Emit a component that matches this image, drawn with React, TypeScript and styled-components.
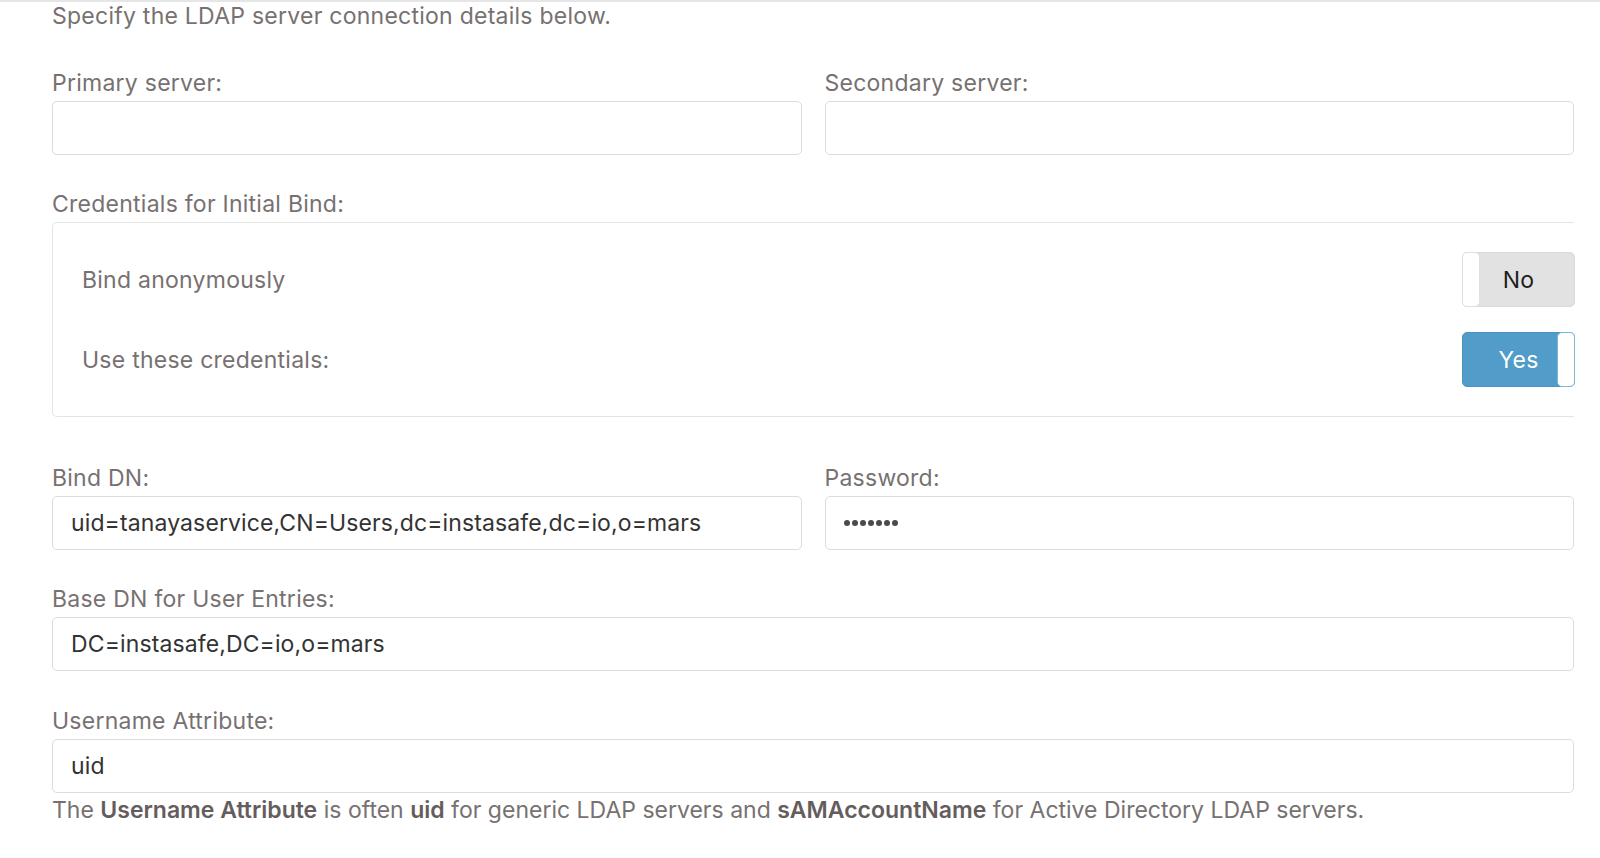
import React from "react";
import styled, { createGlobalStyle } from "styled-components";

const Global = createGlobalStyle`
  html, body { margin: 0; padding: 0; background: #ffffff; }
  body { font-family: Inter, "Open Sans", "Liberation Sans", sans-serif; }
  * { box-sizing: border-box; }
`;

const Page = styled.div`
  border-top: 2px solid #e6e6e6;
  padding: 0 26px 20px 52px;
  width: 1600px;
  font-size: 23px;
  letter-spacing: 0.25px;
`;

const Intro = styled.p`
  margin: 0;
  line-height: 28px;
  color: #777171;
`;

const Row = styled.div<{ $mt: number }>`
  display: grid;
  grid-template-columns: 1fr 1fr;
  column-gap: 23px;
  margin-top: ${(p) => p.$mt}px;
`;

const Field = styled.div<{ $mt?: number }>`
  display: flex;
  flex-direction: column;
  margin-top: ${(p) => p.$mt ?? 0}px;
`;

const Label = styled.label`
  display: block;
  line-height: 28px;
  height: 28px;
  margin-bottom: 4px;
  color: #777171;
`;

const Input = styled.div`
  height: 54px;
  border: 1px solid #dcdcdc;
  border-radius: 5px;
  background: #fff;
  display: flex;
  align-items: center;
  padding-left: 18px;
  color: #333;
  letter-spacing: 0.12px;
`;

const Dots = styled.span`
  display: flex;
  gap: 2px;
`;

const Dot = styled.span`
  width: 6px;
  height: 6px;
  border-radius: 50%;
  background: #4a4a4a;
`;

const CredBox = styled.div`
  border: 1px solid #e4e4e4;
  border-right: none;
  border-radius: 5px 0 0 5px;
  padding: 29px 0 29px 29px;
  display: flex;
  flex-direction: column;
  gap: 25px;
`;

const CredRow = styled.div`
  display: flex;
  align-items: center;
  justify-content: space-between;
  height: 55px;
`;

const CredLabel = styled.span`
  color: #777171;
`;

const Toggle = styled.div<{ $on: boolean }>`
  position: relative;
  width: 113px;
  height: 55px;
  margin-right: -1px;
  border-radius: 5px;
  border: 1px solid ${(p) => (p.$on ? "#4b93c0" : "#dadada")};
  background: ${(p) => (p.$on ? "#519cc9" : "#e2e2e2")};
  color: ${(p) => (p.$on ? "#ffffff" : "#1e1e1e")};
  display: flex;
  align-items: center;
  justify-content: center;
`;

const Knob = styled.span<{ $on: boolean }>`
  position: absolute;
  top: -1px;
  bottom: -1px;
  ${(p) => (p.$on ? "right: -1px;" : "left: -1px;")}
  width: 18px;
  background: #fff;
  border: 1px solid ${(p) => (p.$on ? "#7fb4d6" : "#e0e0e0")};
  border-radius: 5px;
`;

const Help = styled.p`
  margin: 3px 0 0 0;
  line-height: 28px;
  color: #777171;
  letter-spacing: 0;
  b {
    font-weight: 600;
    color: #655d5d;
  }
`;

export default function App() {
  return (
    <>
      <Global />
      <Page>
        <Intro>Specify the LDAP server connection details below.</Intro>
        <Row $mt={39}>
          <Field>
            <Label>Primary server:</Label>
            <Input />
          </Field>
          <Field>
            <Label>Secondary server:</Label>
            <Input />
          </Field>
        </Row>
        <Field $mt={35}>
          <Label>Credentials for Initial Bind:</Label>
          <CredBox>
            <CredRow>
              <CredLabel>Bind anonymously</CredLabel>
              <Toggle $on={false}>
                <Knob $on={false} />
                No
              </Toggle>
            </CredRow>
            <CredRow>
              <CredLabel>Use these credentials:</CredLabel>
              <Toggle $on={true}>
                Yes
                <Knob $on={true} />
              </Toggle>
            </CredRow>
          </CredBox>
        </Field>
        <Row $mt={47}>
          <Field>
            <Label>Bind DN:</Label>
            <Input>uid=tanayaservice,CN=Users,dc=instasafe,dc=io,o=mars</Input>
          </Field>
          <Field>
            <Label>Password:</Label>
            <Input>
              <Dots>
                {Array.from({ length: 7 }).map((_, i) => (
                  <Dot key={i} />
                ))}
              </Dots>
            </Input>
          </Field>
        </Row>
        <Field $mt={35}>
          <Label>Base DN for User Entries:</Label>
          <Input>DC=instasafe,DC=io,o=mars</Input>
        </Field>
        <Field $mt={36}>
          <Label>Username Attribute:</Label>
          <Input>uid</Input>
        </Field>
        <Help>
          The <b>Username Attribute</b> is often <b>uid</b> for generic LDAP servers and{" "}
          <b>sAMAccountName</b> for Active Directory LDAP servers.
        </Help>
      </Page>
    </>
  );
}
